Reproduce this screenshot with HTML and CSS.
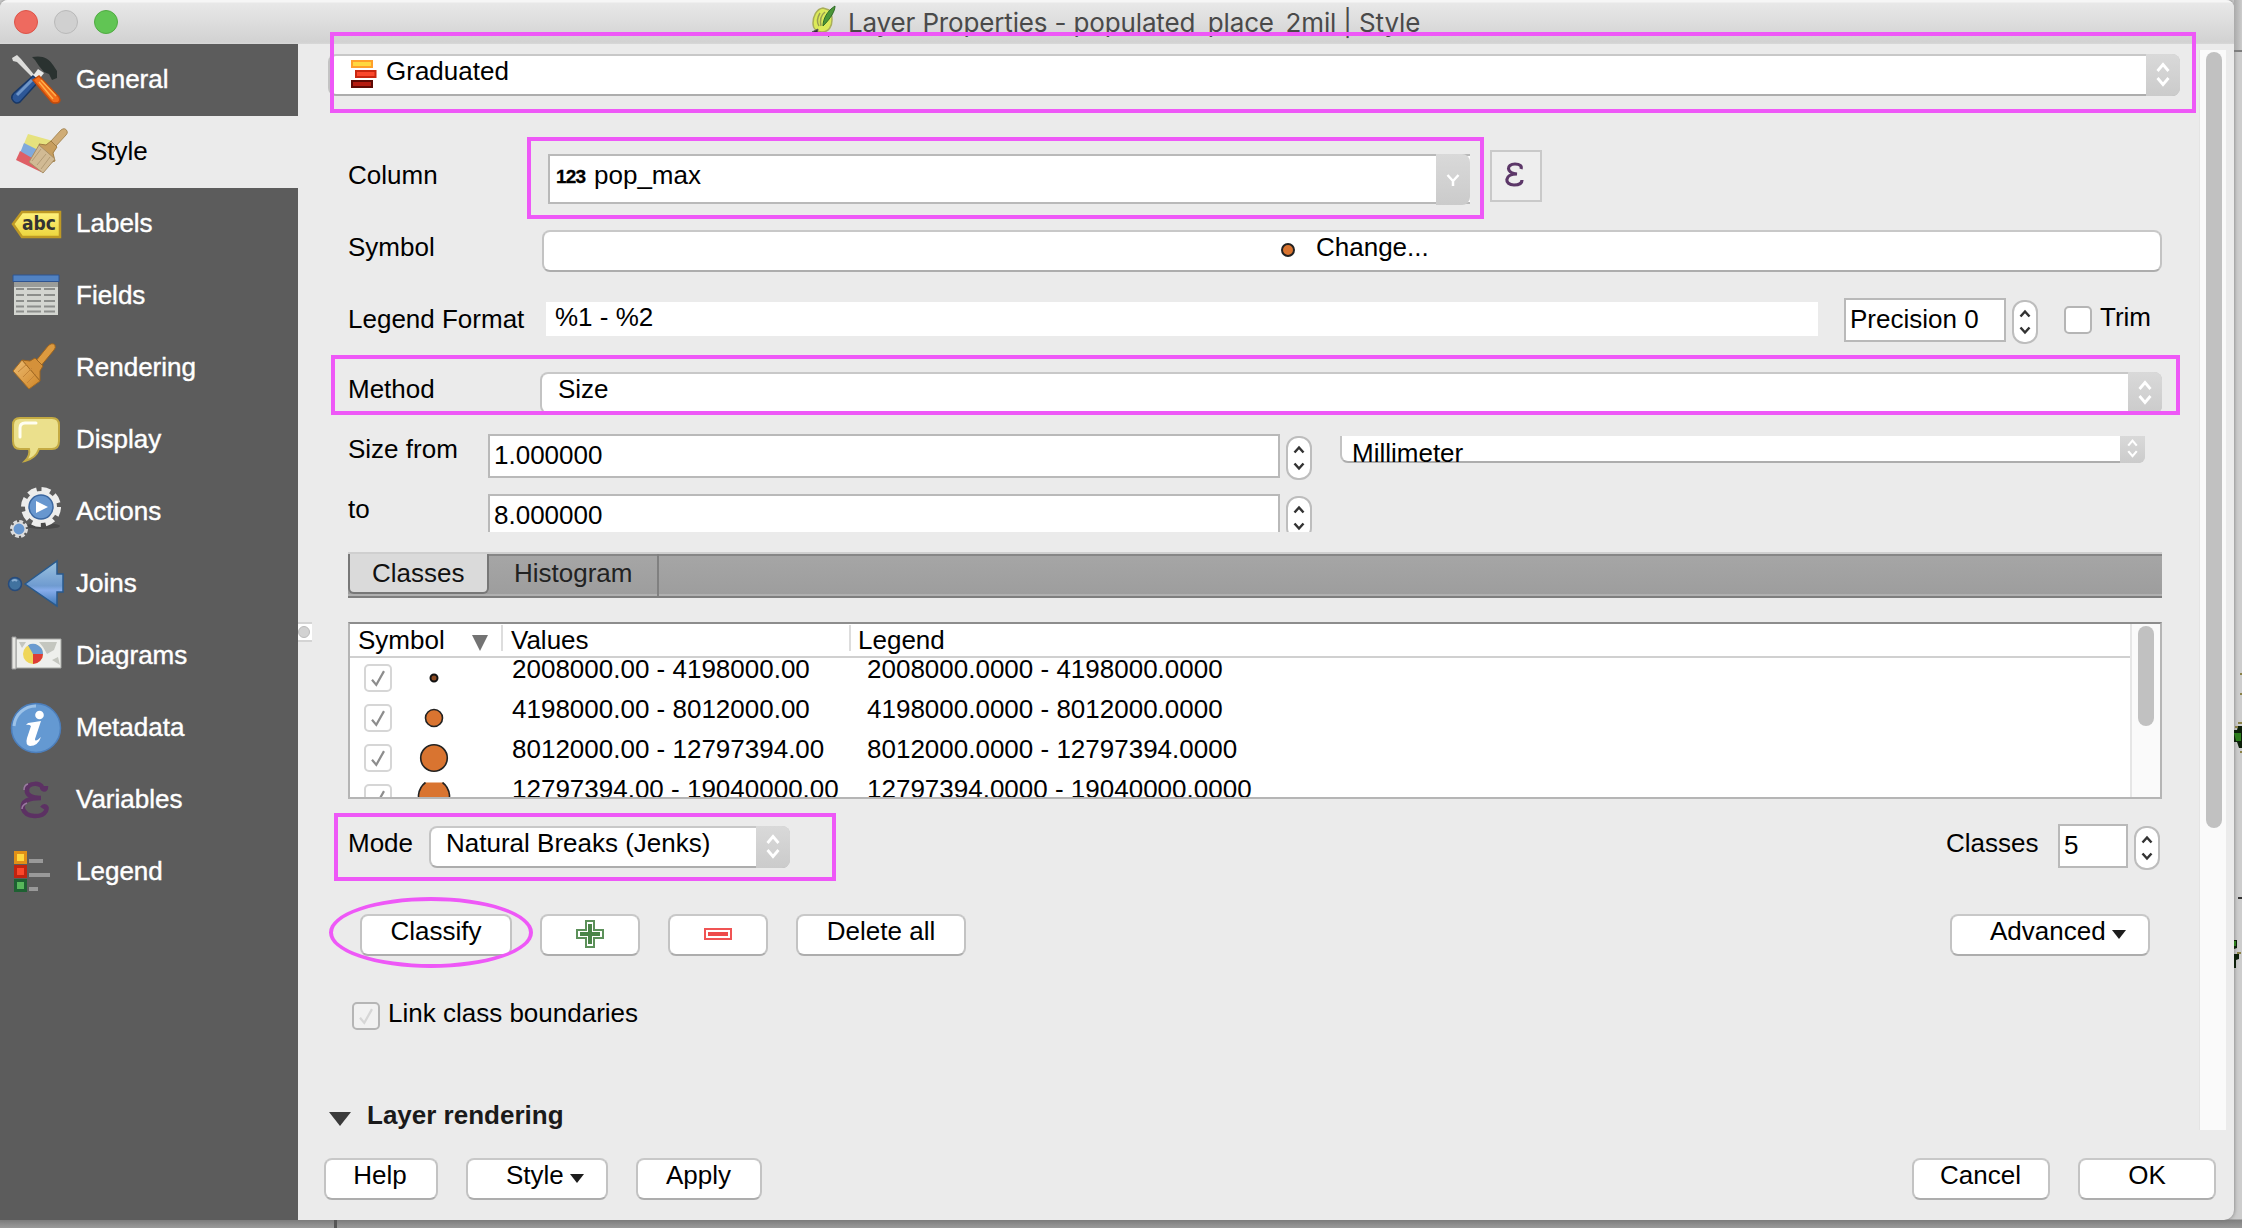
FILE: index.html
```html
<!DOCTYPE html>
<html lang="en">
<head>
<meta charset="utf-8">
<title>Layer Properties - populated_place_2mil | Style</title>
<link rel="stylesheet" href="styles.css">
</head>
<body>
<svg class="defs" width="0" height="0">
  <defs>
    <symbol id="updown" viewBox="0 0 16 36"><path d="M2.500 15 8 8.500l5.500 6.500M2.500 22 8 28.500l5.500-6.500" fill="none" stroke="currentColor" stroke-width="2.800"/></symbol>
    <symbol id="step" viewBox="0 0 16 36"><path d="M3.500 13.500 8 8.500l4.500 5M3.500 24.500 8 29.500l4.500-5" fill="none" stroke="currentColor" stroke-width="2.500"/></symbol>
    <symbol id="tick" viewBox="0 0 28 28"><path d="M7 16l5 6L21 6" fill="none" stroke="currentColor" stroke-width="2.600"/></symbol>
    <linearGradient id="gYellow" x1="0" y1="0" x2="0" y2="1"><stop offset="0" stop-color="#fff27e"/><stop offset="1" stop-color="#ecd53c"/></linearGradient>
    <linearGradient id="gBlue" x1="0" y1="0" x2="0" y2="1"><stop offset="0" stop-color="#9cc4e0"/><stop offset=".55" stop-color="#6f9bd0"/><stop offset=".65" stop-color="#86aceb"/><stop offset="1" stop-color="#3d78b8"/></linearGradient>
    <linearGradient id="gBrush" x1="0" y1="0" x2="1" y2="1"><stop offset="0" stop-color="#edbd74"/><stop offset="1" stop-color="#cf8526"/></linearGradient>
  </defs>
</svg>

<div class="window">
  <header class="titlebar">
    <div class="lights"><i class="red"></i><i class="grey"></i><i class="green"></i></div>
    <div class="title">
      <svg width="26" height="32" viewBox="0 0 26 32"><path d="M12 3C5 4 2 12 2 18c0 6 4 9 9 9 7 0 10-6 10-12 0-4-1-8-3-10z" fill="#dcea5a" stroke="#a9ae5a" stroke-width="1.500"/><path d="M9 8c-3 5-3 10-1 13M14 7c-4 3-5 9-4 14" fill="none" stroke="#9a9e52" stroke-width="1.500"/><path d="M24 1c0 5-4 12-12 20 0-7 4-15 12-20z" fill="#4b9638" stroke="#2f6b27"/><path d="M1 27l6-3-1 5zM15 28l3 4" fill="#333" stroke="#555"/></svg>
      <span>Layer Properties - populated_place_2mil | Style</span>
    </div>
  </header>

  <div class="body">
    <nav class="sidebar">
      <div class="item"><svg viewBox="0 0 72 72"><path d="M12 14l5-3 4 4 15 18-2 2-17-17-4-1z" fill="#dcdcda"/><path d="M32 13c10-2 17 1 21 8l4 6v7l-5 2-3-6-5-2-5-6-4-6z" fill="#2a3230"/><path d="M38 25l6 4-7 9-5-5z" fill="#e8e8e6"/><path d="M33 32l6 5-19 21q-5 3-8-3-1-3 2-6z" fill="#2d5797" stroke="#183765" stroke-width="1.500"/><path d="M17 51l15-15" stroke="#6f96c8" stroke-width="3"/><path d="M33 36l6-4 20 21q3 6-4 6-3 0-5-3z" fill="#f36d1b" stroke="#c44b0c" stroke-width="1.500"/><path d="M39 38l14 17M41 36l15 16" stroke="#ffb04a" stroke-width="1.500"/></svg><span>General</span></div>
      <div class="item active"><svg viewBox="0 0 72 72"><path d="M28 18l25 7-10 16-20-11z" fill="#e6e27e"/><path d="M24 27l20 10-7 9-17-9z" fill="#7fa9dc"/><path d="M20 35l24 14-3 7-25-12z" fill="#df5f66"/><path d="M51 25l10-11q4-3 6 1 1 2-1 4L55 31z" fill="#cfac76" stroke="#a88a58"/><path d="M39 28l7 1 5-4 6 6-4 6 2 8-9 3z" fill="#c79e5e" stroke="#a07c42"/><path d="M39 29l16 14-12 14-14-11z" fill="#d1ba94" stroke="#a88f66"/><path d="M32 45l9-12M37 49l9-11M41 53l9-12" stroke="#b39c76"/></svg><span>Style</span></div>
      <div class="item"><svg viewBox="0 0 72 72"><path d="M13 36l9-12h38v25H22z" fill="url(#gYellow)" stroke="#bf9a25" stroke-width="2.500"/><text x="22" y="42" class="abc" textLength="34" lengthAdjust="spacingAndGlyphs">abc</text></svg><span>Labels</span></div>
      <div class="item"><svg viewBox="0 0 72 72"><path d="M14 21h44v34H14z" fill="#d3d5d0"/><path d="M14 22h44v5H14z" fill="#9a9c99"/><path d="M13 15h46v6.500H13z" fill="#5182c2" stroke="#2f5490"/><path d="M16 29h8m3 0h14m3 0h11M16 35h8m3 0h14m3 0h11M16 41h8m3 0h14m3 0h11M16 46.500h8m3 0h14m3 0h11M16 51.500h8m3 0h14m3 0h11" stroke="#8c8e8b" stroke-width="2"/></svg><span>Fields</span></div>
      <div class="item"><svg viewBox="0 0 72 72"><path d="M35 30l13-16q4-4 7-1 1 3-1 5L40 35z" fill="#dc9a3f" stroke="#9c6420"/><path d="M22 28l8 1 5-3 8 8-3 5v10z" fill="#d4913a" stroke="#9c6420"/><path d="M22 28l18 21-11 8-16-18z" fill="url(#gBrush)" stroke="#a66c22"/><path d="M18 40l9-8M23 45l9-9M27 51l9-9" stroke="#c48438"/></svg><span>Rendering</span></div>
      <div class="item"><svg viewBox="0 0 72 72"><path d="M20 14h32q7 0 7 7v16q0 8-7 8H39c-2 6-6 10-14 12 4-4 5-8 4-12h-9q-7 0-7-8V21q0-7 7-7z" fill="#ebe08c" stroke="#c4ab43" stroke-width="2"/><path d="M20 33V24q0-5 5-5h11" fill="none" stroke="#fffef0" stroke-width="3" stroke-linecap="round"/></svg><span>Display</span></div>
      <div class="item"><svg viewBox="0 0 72 72"><ellipse cx="43" cy="50" rx="17" ry="3" fill="#484848"/><circle cx="41" cy="31" r="17" fill="none" stroke="#ededec" stroke-width="6" stroke-dasharray="8.600 4.750"/><circle cx="41" cy="31" r="16" fill="#ededec"/><circle cx="41" cy="31" r="12" fill="#6897cf" stroke="#3b67a0" stroke-width="1.500"/><path d="M36 25l12 6-12 6z" fill="#fff"/><circle cx="19" cy="53" r="7.500" fill="none" stroke="#dcdcdc" stroke-width="3" stroke-dasharray="3.800 2.090"/><circle cx="19" cy="53" r="6.200" fill="#6897cf" stroke="#ddd" stroke-width="1.500"/></svg><span>Actions</span></div>
      <div class="item"><svg viewBox="0 0 72 72"><circle cx="15" cy="36" r="6.500" fill="#41729f" stroke="#274b7c" stroke-width="1.500"/><path d="M12 33q3-2 5 0" stroke="#88acd0" stroke-width="2" fill="none"/><path d="M25 36L57 13v13h6v18h-6v14z" fill="url(#gBlue)" stroke="#285a8e" stroke-width="1.500"/></svg><span>Joins</span></div>
      <div class="item"><svg viewBox="0 0 72 72"><path d="M16 19h45v29H16z" fill="#eeefec" stroke="#a4a6a2"/><path d="M12 17h4v32h-4z" fill="#e6e6e2" stroke="#999"/><path d="M19 22h7l-4 6zM39 22h18l-3 8-7 4-4-7zM52 40l6-3 2 8z" fill="#c4c6bf"/><circle cx="33" cy="34" r="10" fill="#efd659"/><path d="M33 34l-5-8.700a10 10 0 0 1 15 8.700z" fill="#6b9bd0"/><path d="M33 34h10a10 10 0 0 1-10 10z" fill="#dd3c36"/></svg><span>Diagrams</span></div>
      <div class="item"><svg viewBox="0 0 72 72"><circle cx="36" cy="36" r="24.500" fill="#6499d2" stroke="#4c7ebb" stroke-width="1.500"/><path d="M14 34a22 22 0 0 1 22-20" fill="none" stroke="#9cc2e8" stroke-width="3"/><circle cx="39.500" cy="23" r="4.300" fill="#fff"/><path d="M28 31q7-1 13-2l-6 18c0 3 3 1 6-2q-3 9-11 9-5-1-3-8l4-12q-2-2-5-1z" fill="#fff"/></svg><span>Metadata</span></div>
      <div class="item"><svg viewBox="0 0 72 72"><path d="M46 22c0 5-4 4-4 1-1-4-13-5-15 2-1 6 4 9 14 9-12 0-20 3-18 11 3 9 19 9 23 2 2-5-2-6-4-3" fill="none" stroke="#5c3163" stroke-width="4.500"/><path d="M24 26q0-5 4-6M22 45q0-4 5-6" stroke="#9a7aa0" stroke-width="1.500" fill="none"/></svg><span>Variables</span></div>
      <div class="item"><svg viewBox="0 0 72 72"><path d="M15.500 16.500h10v10h-10z" fill="#ffd83f" stroke="#e09018" stroke-width="3"/><path d="M15.500 30.500h10v10h-10z" fill="#fb472b" stroke="#c12310" stroke-width="3"/><path d="M15.500 44.500h10v10h-10z" fill="#58b85b" stroke="#1e6132" stroke-width="3"/><path d="M29 25h14M29 39h21M29 53h9" stroke="#999" stroke-width="4"/></svg><span>Legend</span></div>
    </nav>

    <div class="splitter"><i></i></div>

    <div class="panel">
      <div class="scroll">
        <div class="content">
          <div class="row r-renderer">
            <div class="combo renderer"><svg width="26" height="30" viewBox="0 0 26 30"><path d="M1 2h20v6H1z" fill="#ffd83f" stroke="#ffa02a" stroke-width="2"/><path d="M5 12h19.500v6H5z" fill="#fb472b" stroke="#c8260f" stroke-width="2"/><path d="M1 22h20v6H1z" fill="#b31b10" stroke="#5d0904" stroke-width="2"/></svg><span>Graduated</span><b><svg><use href="#updown"/></svg></b></div>
          </div>
          <div class="row r-column">
            <label class="lbl">Column</label>
            <div class="edit column"><em>123</em><span>pop_max</span><b><svg viewBox="0 0 16 36"><path d="M2.500 17 8 23l5.500-6M8 22v6" fill="none" stroke="#fff" stroke-width="2.500"/></svg></b></div>
            <div class="expr"><svg width="22" height="26" viewBox="0 0 22 26"><path d="M17 7c1-3-1-5-6-5-9 0-9 9 2 10-13 0-13 11-3 11 5 0 8-2 8-5" fill="none" stroke="#5c3768" stroke-width="3.200"/></svg></div>
          </div>
          <div class="row r-symbol">
            <label class="lbl">Symbol</label>
            <div class="btn change"><i class="dot"></i>Change...</div>
          </div>
          <div class="row r-format">
            <label class="lbl">Legend Format</label>
            <div class="plain">%1 - %2</div>
            <div class="edit precision">Precision 0</div>
            <div class="spin"><svg><use href="#step"/></svg></div>
            <div class="check trim-check"></div>
            <span class="trim">Trim</span>
          </div>
          <div class="row r-method">
            <label class="lbl">Method</label>
            <div class="combo method"><span>Size</span><b><svg><use href="#updown"/></svg></b></div>
          </div>
          <div class="row r-from">
            <label class="lbl">Size from</label>
            <div class="edit size">1.000000</div>
            <div class="spin"><svg><use href="#step"/></svg></div>
            <div class="unit"><span>Millimeter</span><b><svg><use href="#updown"/></svg></b></div>
          </div>
          <div class="row r-to">
            <label class="lbl">to</label>
            <div class="edit size">8.000000</div>
            <div class="spin"><svg><use href="#step"/></svg></div>
          </div>

          <div class="tabs"><div class="tab on">Classes</div><div class="tab">Histogram</div></div>

          <div class="table">
            <div class="cells">
              <div class="thead"><div class="c1">Symbol<i></i></div><div class="c2">Values</div><div class="c3">Legend</div></div>
              <div class="tr"><div class="c1"><svg class="ck"><use href="#tick"/></svg><svg class="sy" viewBox="0 0 40 40"><circle cx="20" cy="20" r="3.500" fill="#8a4a22" stroke="#111" stroke-width="2"/></svg></div><div class="c2">2008000.00 - 4198000.00</div><div class="c3">2008000.0000 - 4198000.0000</div></div>
              <div class="tr"><div class="c1"><svg class="ck"><use href="#tick"/></svg><svg class="sy" viewBox="0 0 40 40"><circle cx="20" cy="20" r="8.500" fill="#d97430" stroke="#222" stroke-width="1.600"/></svg></div><div class="c2">4198000.00 - 8012000.00</div><div class="c3">4198000.0000 - 8012000.0000</div></div>
              <div class="tr"><div class="c1"><svg class="ck"><use href="#tick"/></svg><svg class="sy" viewBox="0 0 40 40"><circle cx="20" cy="20" r="13.300" fill="#d97430" stroke="#222" stroke-width="1.600"/></svg></div><div class="c2">8012000.00 - 12797394.00</div><div class="c3">8012000.0000 - 12797394.0000</div></div>
              <div class="tr"><div class="c1"><svg class="ck"><use href="#tick"/></svg><svg class="sy" viewBox="0 0 40 40"><path d="M4.500 22v-5q1-8 7-12.500h17q6 4.500 7 12.500v5z" fill="#d97430"/><path d="M4.500 22v-5q1-8 7-12.500M28.500 4.500q6 4.500 7 12.500v5" fill="none" stroke="#222" stroke-width="1.600"/></svg></div><div class="c2">12797394.00 - 19040000.00</div><div class="c3">12797394.0000 - 19040000.0000</div></div>
            </div>
            <div class="tscroll"><i></i></div>
          </div>

          <div class="row r-mode">
            <label class="lbl">Mode</label>
            <div class="combo mode"><span>Natural Breaks (Jenks)</span><b><svg><use href="#updown"/></svg></b></div>
            <span class="lbl classes">Classes</span>
            <div class="edit five">5</div>
            <div class="spin"><svg><use href="#step"/></svg></div>
          </div>
          <div class="row r-actions">
            <div class="btn classify">Classify</div>
            <div class="btn icon"><svg width="30" height="30" viewBox="0 0 30 30"><path d="M11 2h8v9h9v8h-9v9h-8v-9H2v-8h9z" fill="#fff" stroke="#5c915a" stroke-width="2"/><path d="M15 5v20M5 15h20" stroke="#4a8448" stroke-width="4"/></svg></div>
            <div class="btn icon"><svg width="30" height="30" viewBox="0 0 30 30"><path d="M2 10h26v10H2z" fill="#fff" stroke="#f05454" stroke-width="2"/><path d="M5 15h20" stroke="#ee4b4b" stroke-width="4"/></svg></div>
            <div class="btn delete">Delete all</div>
            <div class="btn advanced">Advanced<i class="tri"></i></div>
          </div>
          <div class="row r-link">
            <div class="check off"><svg><use href="#tick"/></svg></div>
            <span class="lbl">Link class boundaries</span>
          </div>
          <div class="row r-layer">
            <i class="disclose"></i><strong class="lbl">Layer rendering</strong>
          </div>
        </div>
        <div class="scrollbar"><i></i></div>
      </div>

      <footer class="footer">
        <div class="btn help">Help</div>
        <div class="btn stylebtn">Style<i class="tri"></i></div>
        <div class="btn apply">Apply</div>
        <div class="btn cancel">Cancel</div>
        <div class="btn ok">OK</div>
      </footer>
    </div>
  </div>
</div>

<div class="desktop-top"></div>
<svg class="map-edge" width="8" height="400" viewBox="0 0 8 400"><path d="M0 90h3l1-4h4v22H5l-2-6H0zM0 300h3v8l-3 1zM0 314h5v5l-3 1v8H0z" fill="#0d1f0a"/><path d="M0 93h7v8H2zM0 301h2v5H0z" fill="#2c7c1c"/><path d="M4 83h4M1 87h3M6 34h2M6 54h2M6 112h2M3 313h4" stroke="#8a8148" stroke-width="2"/><path d="M4 258h4" stroke="#333" stroke-width="2"/></svg>
<div class="desktop-line"></div>

<div class="mark m1"></div>
<div class="mark m2"></div>
<div class="mark m3"></div>
<div class="mark m4"></div>
<div class="mark m5"></div>
</body>
</html>
```
FILE: styles.css
```css
* { box-sizing: border-box; }
body {
  margin: 0; width: 2242px; height: 1228px; overflow: hidden; position: relative;
  background: linear-gradient(#cdcdcd 0, #cdcdcd 1219px, #808080 1220px, #999 1228px);
  font: 26px/40px "Liberation Sans", Arial, sans-serif; color: #000; white-space: nowrap;
}
svg { display: block; flex: none; }
.defs { position: absolute; }
.window {
  width: 2234px; height: 1220px; background: #ebebeb; border-radius: 8px 8px 10px 0; overflow: hidden;
  display: flex; flex-direction: column; box-shadow: 0 0 4px #777;
}
.titlebar {
  height: 44px; flex: none; display: flex;
  background: linear-gradient(#f6f6f6 0, #f6f6f6 2px, #e8e8e8 3px, #d2d2d2 42px, #d8d8d8);
}
.lights { display: flex; gap: 16px; padding: 10px 0 0 14px; width: 811px; }
.lights i { width: 24px; height: 24px; border-radius: 50%; border: 1.5px solid; }
.red { background: #ee6a5f; border-color: #dd5348 !important; }
.grey { background: #d0d0d0; border-color: #b9b9b9 !important; }
.green { background: #61c554; border-color: #50ab42 !important; }
.title { display: flex; gap: 11px; padding-top: 5px; color: #4a4a4a; font-family: Inter, sans-serif; font-size: 26px; line-height: 36px; letter-spacing: -.15px; }

.body { flex: 1; display: flex; min-height: 0; }
.sidebar { width: 298px; background: #5c5c5c; flex: none; }
.item { height: 72px; display: flex; color: #fff; line-height: 70px; }
.item svg { width: 72px; height: 72px; margin-right: 4px; }
.item span { -webkit-text-stroke: .4px; }
.item.active { background: #ebebeb; color: #000; }
.item.active span { margin-left: 14px; -webkit-text-stroke: 0; }
.abc { font: bold 20px "DejaVu Sans", sans-serif; fill: #333; }

.splitter { width: 14px; margin-top: 578px; height: 20px; background: #fff; border: solid #d4d4d4; border-width: 2px 0; }
.splitter i { display: block; width: 12px; height: 12px; margin: 2px 0; border-radius: 50%; background: #d2d2d2; border: 1px solid #bbb; }

.panel { flex: 1; display: flex; flex-direction: column; }
.scroll { height: 1086px; display: flex; flex: none; }
.content { width: 1887px; padding-left: 16px; flex: none; }
.scrollbar { width: 27px; margin-top: 6px; background: #fafafa; border-left: 1px solid #e4e4e4; padding: 2px 0 0 6px; }
.scrollbar i { display: block; width: 16px; height: 776px; border-radius: 8px; background: #c1c1c1; }

.row { display: flex; align-items: flex-start; padding-left: 20px; }
.lbl { flex: none; }
.r-renderer { height: 92px; padding: 10px 0 0 0; }
.r-column { height: 84px; padding-top: 18px; }
.r-symbol { height: 70px; padding-top: 10px; }
.r-format { height: 64px; padding-top: 8px; }
.r-method { height: 70px; padding-top: 18px; }
.r-from { height: 60px; padding-top: 10px; }
.r-mode { height: 92px; padding-top: 28px; }
.r-actions { height: 90px; padding-top: 24px; }
.r-link { height: 90px; padding-top: 22px; }
.r-layer { height: 60px; padding-top: 25px; }

.combo, .btn {
  height: 42px; background: #fff; border: 2px solid #c3c3c3; border-color: #c8c8c8 #c3c3c3 #adadad;
  border-radius: 8px; line-height: 30px; flex: none; display: flex;
}
.combo b, .unit b, .column b {
  display: flex; justify-content: center; width: 34px; margin-left: auto; margin-top: -2px; margin-right: -2px;
  height: 42px; background: linear-gradient(#d9d9d9, #cbcbcb); border-radius: 0 8px 8px 0; color: #fff; flex: none;
}
.combo b svg, .unit b svg { width: 18px; height: 36px; margin-top: 2px; }
.renderer { width: 1852px; padding-left: 21px; }
.renderer svg { margin-top: 3px; }
.renderer span { margin-left: 9px; }

.r-column .lbl { width: 200px; margin-top: 1px; }
.edit { height: 44px; background: #fff; border: 2px solid #b9b9b9; line-height: 38px; padding-left: 4px; flex: none; }
.column { width: 922px; height: 50px; display: flex; border-right: 0; padding-left: 6px; }
.column em { font: bold 19px/41px "Liberation Sans", sans-serif; width: 38px; letter-spacing: -.8px; -webkit-text-stroke: .3px; }
.column b { height: 51px; margin-right: 0; }
.column b svg { width: 16px; height: 36px; margin-top: 4px; }
.expr { width: 52px; height: 52px; margin: -4px 0 0 20px; border: 2px solid #c9c9c9; background: #eee; padding: 10px 0 0 12px; }

.r-symbol .lbl { width: 194px; margin-top: -3px; }
.change { width: 1620px; padding-left: 737px; }
.dot { width: 14px; height: 14px; border-radius: 50%; background: #d97430; border: 2px solid #222; margin: 11px 21px 0 0; }

.r-format .lbl { width: 198px; margin-top: 1px; }
.plain { width: 1272px; height: 34px; background: #fff; margin-top: 4px; padding-left: 9px; line-height: 30px; }
.precision { width: 162px; margin-left: 26px; padding-left: 4px; }
.spin { width: 26px; height: 44px; margin: 2px 0 0 6px; border: 2px solid #bdbdbd; border-radius: 12px; background: #fff; color: #333; padding: 1px 0 0 3px; flex: none; }
.spin svg { width: 16px; height: 36px; }
.check { width: 28px; height: 28px; border: 2px solid #b5b5b5; border-radius: 5px; background: #fff; }
.trim-check { margin: 8px 0 0 26px; }
.trim { margin: -1px 0 0 8px; }

.r-method .lbl { width: 192px; margin-top: -3px; }
.method { width: 1622px; padding-left: 16px; }

.r-from .lbl, .r-to .lbl { width: 140px; margin-top: -5px; }
.size { width: 792px; }
.unit { width: 805px; height: 27px; margin: 2px 0 0 28px; background: #fff; border: 2px solid #c3c3c3; border-width: 0 0 2px 2px; border-bottom-color: #adadad; border-radius: 0 0 8px 8px; display: flex; padding-left: 10px; line-height: 34px; }
.unit b { width: 25px; height: 27px; margin: 0 0 0 auto; border-radius: 0 0 6px 0; }
.unit b svg { width: 13px; height: 28px; margin-top: -2px; }
.r-to { height: 38px; padding: 0 0 0 20px; margin: 10px 0 20px; overflow: hidden; }
.r-to .spin { margin-top: 2px; }

.tabs { width: 1814px; height: 46px; margin-left: 20px; background: linear-gradient(#a6a6a6, #9d9d9d); border-top: 2px solid #cfcfcf; border-bottom: 2px solid #7e7e7e; box-shadow: inset 0 2px #868686, inset 0 -2px #b0b0b0; display: flex; line-height: 39px; }
.tab { width: 170px; padding-left: 25px; border-right: 2px solid #808080; height: 42px; color: #222; }
.tab.on { width: 141px; height: 40px; background: #dadada; border: 2px solid #777; border-top: 0; border-radius: 0 0 6px 6px; padding-left: 22px; color: #111; }

.table { width: 1814px; height: 177px; margin: 24px 0 -1px 20px; background: #fff; border: 2px solid #b5b5b5; border-top-color: #8d8d8d; display: flex; overflow: hidden; }
.cells { flex: 1; }
.thead { height: 34px; border-bottom: 2px solid #d0d0d0; display: flex; line-height: 31px; }
.thead > div { border-right: 2px solid #ddd; height: 26px; margin-top: 1px; }
.thead .c1 { width: 153px; padding-left: 8px; display: flex; }
.thead .c1 i { border: solid transparent; border-width: 16px 8px 0; border-top-color: #737373; height: 0; margin: 10px 0 0 27px; }
.thead .c2 { width: 348px; padding-left: 8px; }
.thead .c3 { padding-left: 7px; border: 0; }
.tr { height: 40px; display: flex; line-height: 23px; }
.tr .c1 { width: 162px; display: flex; padding-left: 14px; }
.ck { width: 28px; height: 28px; margin-top: 6px; border: 2px solid #d6d6d6; border-radius: 5px; color: #8d8d8d; }
.sy { width: 40px; height: 40px; margin-left: 22px; }
.tr .c2 { width: 355px; }
.tscroll { width: 30px; background: #fafafa; border-left: 2px solid #e6e6e6; padding: 2px 0 0 6px; }
.tscroll i { display: block; width: 16px; height: 100px; border-radius: 8px; background: #c1c1c1; }

.r-mode .lbl { width: 81px; margin-top: -3px; }
.mode { width: 361px; padding-left: 15px; }
.r-mode .classes { width: 112px; margin-left: 1156px; }
.five { width: 70px; margin-top: -2px; }
.r-mode .spin { margin-top: 0; }

.r-actions { padding-left: 19px; }
.classify { width: 152px; margin-left: 13px; }
.classify, .delete, .help, .apply, .cancel, .ok { justify-content: center; }
.icon { width: 100px; margin-left: 28px; justify-content: center; padding-top: 3px; }
.delete { width: 170px; margin-left: 28px; }
.advanced { width: 200px; margin-left: 984px; padding-left: 38px; }
.tri { border: solid transparent; border-width: 9px 7px 0; border-top-color: #1d1d1d; height: 0; margin: 14px 0 0 6px; }
.off { margin-left: 4px; background: #f1f1f1; color: #d6d6d6; }
.off svg { width: 24px; height: 24px; }
.r-link .lbl { margin: -9px 0 0 8px; }
.disclose { border: solid transparent; border-width: 14px 11px 0; border-top-color: #3a3a3a; height: 0; margin: 17px 0 0; }
.r-layer { padding-left: 1px; }
.r-layer .lbl { margin-left: 16px; color: #1a1a1a; }

.footer { display: flex; padding: 28px 0 0 12px; }
.help { width: 114px; padding-right: 2px; }
.stylebtn { width: 142px; margin-left: 28px; padding-left: 38px; }
.apply { width: 126px; margin-left: 28px; padding-right: 1px; }
.cancel { width: 138px; margin-left: 1150px; padding-right: 1px; }
.ok { width: 138px; margin-left: 28px; }

.desktop-top { position: absolute; left: 2234px; top: 0; width: 8px; height: 52px; background: linear-gradient(90deg, #aaa, #ccc); border-bottom: 2px solid #7e7e7e; }
.map-edge { position: absolute; left: 2234px; top: 640px; }
.desktop-line { position: absolute; left: 334px; top: 1220px; width: 3px; height: 8px; background: #555; }

.mark { position: absolute; border: 4px solid #ee58f7; }
.m1 { left: 330px; top: 32px; width: 1866px; height: 81px; }
.m2 { left: 527px; top: 137px; width: 957px; height: 82px; }
.m3 { left: 331px; top: 355px; width: 1849px; height: 60px; }
.m4 { left: 334px; top: 813px; width: 502px; height: 68px; }
.m5 { left: 329px; top: 897px; width: 204px; height: 71px; border-radius: 50%; }
```
